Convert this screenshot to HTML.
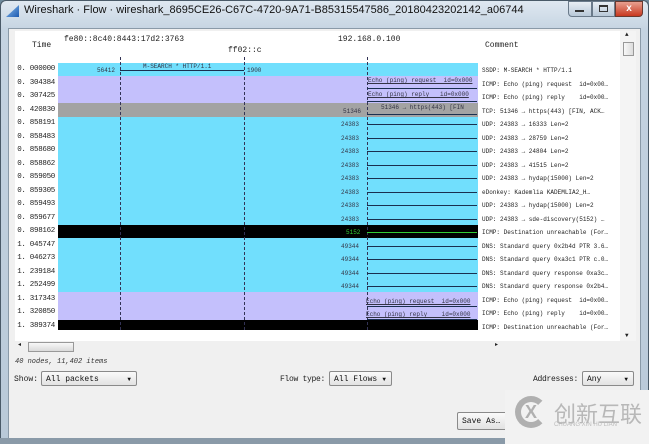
<!DOCTYPE html>
<html><head><style>
*{margin:0;padding:0;box-sizing:border-box}
body{width:649px;height:444px;overflow:hidden;background:#6e8a9c;font-family:"Liberation Mono",monospace;position:relative}
.a{position:absolute}
.win{left:0;top:0;width:649px;height:444px;background:linear-gradient(#dfe8f1,#c4d3e1 30px,#b9c9d8);border:1px solid #4a5a68;border-radius:6px 6px 0 0}
.cl{left:8px;top:28px;width:633px;height:412px;background:#f0f0f0;border:1px solid #8a9aa8}
.t{font-size:8px;color:#222;white-space:nowrap}
.row{left:58px;width:420px;height:14px}
.lbl{font-size:6px;color:#334;white-space:nowrap}
.line{height:1px;background:#1a3050}
.cb{background:linear-gradient(#fafafa,#e2e2e2);border:1px solid #8a8a8a;border-radius:2px;font-size:8px;padding:3px 4px;color:#111;white-space:nowrap}
.cb.dd:after{content:"▼";position:absolute;right:5px;top:4px;font-size:6px}
.sans{font-family:"Liberation Sans",sans-serif}
</style></head><body>
<div class="a win"></div>
<div class="a" style="left:6px;top:5px;width:13px;height:12px;background:linear-gradient(135deg,#8ec0f0,#1c5ab0);clip-path:polygon(0 100%,100% 0,100% 100%)"></div>
<div class="a sans" style="left:24px;top:4px;font-size:11px;color:#111;white-space:nowrap">Wireshark · Flow · wireshark_8695CE26-C67C-4720-9A71-B85315547586_20180423202142_a06744</div>
<div class="a" style="left:568px;top:1px;width:24px;height:16px;background:linear-gradient(#e8eef4,#b8c8d8);border:1px solid #6a7a8a;border-radius:0 0 0 4px"></div>
<div class="a" style="left:575px;top:10px;width:9px;height:2px;background:#333"></div>
<div class="a" style="left:592px;top:1px;width:23px;height:16px;background:linear-gradient(#e8eef4,#b8c8d8);border:1px solid #6a7a8a"></div>
<div class="a" style="left:599px;top:5px;width:9px;height:7px;border:1px solid #333;border-top-width:2px"></div>
<div class="a sans" style="left:615px;top:1px;width:28px;height:16px;background:linear-gradient(#e8a090,#c83820);border:1px solid #6a3a30;border-radius:0 0 4px 0;color:#fff;font-size:10px;font-weight:bold;text-align:center;line-height:14px">x</div>
<div class="a cl"></div>
<div class="a" style="left:15px;top:31px;width:605px;height:310px;background:#fff"></div>
<div class="a" style="left:620px;top:31px;width:16px;height:310px;background:#f4f4f4"></div>
<div class="a" style="left:623px;top:42px;width:11px;height:14px;background:linear-gradient(90deg,#f8f8f8,#dcdcdc);border:1px solid #999"></div>
<div class="a t" style="left:625px;top:31px;font-size:6px">▲</div>
<div class="a t" style="left:625px;top:332px;font-size:6px">▼</div>
<div class="a t" style="left:32px;top:41px">Time</div>
<div class="a t" style="left:64px;top:35px">fe80::8c40:8443:17d2:3763</div>
<div class="a t" style="left:228px;top:46px">ff02::c</div>
<div class="a t" style="left:338px;top:35px">192.168.0.100</div>
<div class="a t" style="left:485px;top:41px">Comment</div>

<div class="a row" style="top:63px;background:#71dffd"></div>
<div class="a row" style="top:76px;height:28px;background:#c4c0fc"></div>
<div class="a row" style="top:103px;background:#a3a3a3"></div>
<div class="a row" style="top:117px;height:109px;background:#71dffd"></div>
<div class="a row" style="top:225px;height:13px;background:#000"></div>
<div class="a row" style="top:238px;height:55px;background:#71dffd"></div>
<div class="a row" style="top:292px;height:28px;background:#c4c0fc"></div>
<div class="a row" style="top:320px;height:10px;background:#000"></div>

<div class="a" style="left:120px;top:57px;height:273px;border-left:1px dashed #335"></div>
<div class="a" style="left:244px;top:57px;height:273px;border-left:1px dashed #335"></div>
<div class="a" style="left:367px;top:57px;height:273px;border-left:1px dashed #335"></div>

<div class="a line" style="left:120px;top:70px;width:124px"></div>
<div class="a lbl" style="left:143px;top:63px">M-SEARCH * HTTP/1.1</div>
<div class="a lbl" style="left:97px;top:67px">56412</div>
<div class="a lbl" style="left:247px;top:67px">1900</div>
<div class="a lbl" style="left:368px;top:77px;text-decoration:underline">Echo (ping) request &nbsp;id=0x000</div>
<div class="a line" style="left:367px;top:88px;width:110px"></div>
<div class="a lbl" style="left:368px;top:91px;text-decoration:underline">Echo (ping) reply &nbsp;&nbsp;id=0x000</div>
<div class="a line" style="left:367px;top:101px;width:110px"></div>
<div class="a line" style="left:367px;top:114px;width:110px"></div>
<div class="a lbl" style="left:381px;top:104px">51346 → https(443) [FIN</div>
<div class="a lbl" style="left:343px;top:108px">51346</div>

<div id="g"></div>

<div class="a lbl" style="left:366px;top:298px;text-decoration:underline">Echo (ping) request &nbsp;id=0x000</div>
<div class="a line" style="left:367px;top:306px;width:110px"></div>
<div class="a lbl" style="left:366px;top:311px;text-decoration:underline">Echo (ping) reply &nbsp;&nbsp;&nbsp;id=0x000</div>
<div class="a line" style="left:367px;top:319px;width:110px"></div>

<div class="a" style="left:15px;top:341px;width:605px;height:11px;background:#f0f0f0"></div>
<div class="a" style="left:28px;top:342px;width:46px;height:10px;background:linear-gradient(#f8f8f8,#dadada);border:1px solid #999"></div>
<div class="a t sans" style="left:18px;top:341px;font-size:6px">◂</div>
<div class="a t sans" style="left:495px;top:341px;font-size:6px">▸</div>
<div class="a t" style="left:15px;top:358px;font-size:7px;font-style:italic;color:#333">40 nodes, 11,402 items</div>
<div class="a t" style="left:14px;top:375px;font-size:8px">Show:</div>
<div class="a cb dd" style="left:41px;top:371px;width:96px;height:15px">All packets</div>
<div class="a t" style="left:280px;top:375px;font-size:8px;letter-spacing:-0.3px">Flow type:</div>
<div class="a cb dd" style="left:329px;top:371px;width:63px;height:15px">All Flows</div>
<div class="a t" style="left:533px;top:375px;font-size:8px;letter-spacing:-0.3px">Addresses:</div>
<div class="a cb dd" style="left:582px;top:371px;width:52px;height:15px">Any</div>
<div class="a cb" style="left:457px;top:412px;width:50px;height:18px;padding-top:4px">Save As…</div>
<div class="a" style="left:0;top:438px;width:649px;height:6px;background:#8a9aa8"></div>
<div class="a" style="left:505px;top:390px;width:144px;height:54px;background:#f2f2f2"></div>
<div class="a" style="left:515px;top:396px;width:32px;height:32px;border-radius:50%;border:6px solid #b0b0b0;border-right-color:transparent"></div>
<div class="a sans" style="left:525px;top:402px;font-size:18px;font-weight:bold;color:#b0b0b0">X</div>
<div class="a" style="left:554px;top:397px;font-size:22px;color:#b8b8b8;font-family:'Liberation Sans','Noto Sans CJK SC',sans-serif;white-space:nowrap">创新互联</div>
<div class="a sans" style="left:554px;top:422px;font-size:6px;color:#bbb;white-space:nowrap">CHUANG XIN HU LIAN</div>

<script>
var times=["0.000000","0.304384","0.307425","0.420830","0.858191","0.858483","0.858680","0.858862","0.859050","0.859305","0.859493","0.859677","0.898162","1.045747","1.046273","1.239184","1.252499","1.317343","1.320850","1.389374"];
var com=["SSDP: M-SEARCH * HTTP/1.1","ICMP: Echo (ping) request  id=0x00…","ICMP: Echo (ping) reply    id=0x00…","TCP: 51346 → https(443) [FIN, ACK…","UDP: 24383 → 16333 Len=2","UDP: 24383 → 28759 Len=2","UDP: 24383 → 24804 Len=2","UDP: 24383 → 41515 Len=2","UDP: 24383 → hydap(15000) Len=2","eDonkey: Kademlia KADEMLIA2_H…","UDP: 24383 → hydap(15000) Len=2","UDP: 24383 → sde-discovery(5152) …","ICMP: Destination unreachable (For…","DNS: Standard query 0x2b4d PTR 3.6…","DNS: Standard query 0xa3c1 PTR c.0…","DNS: Standard query response 0xa3c…","DNS: Standard query response 0x2b4…","ICMP: Echo (ping) request  id=0x00…","ICMP: Echo (ping) reply    id=0x00…","ICMP: Destination unreachable (For…"];
var h="";
for(var i=0;i<20;i++){var y=63+i*13.5;
h+='<div class="a t" style="left:8px;width:47px;text-align:right;top:'+(y+2)+'px;font-size:7.5px;letter-spacing:-0.3px">'+times[i].replace(".",". ")+'</div>';
h+='<div class="a lbl" style="left:482px;top:'+(y+4)+'px;white-space:pre;color:#222">'+com[i]+'</div>';
if(i>=4&&i<=16){var port=i<12?"24383":(i==12?"5152":"49344");var col=i==12?"#3c3":"#1a3050";
h+='<div class="a lbl" style="left:'+(i==12?346:341)+'px;top:'+(y+4)+'px;color:'+(i==12?"#3c3":"#334")+'">'+port+'</div>';
h+='<div class="a line" style="left:367px;top:'+(y+7)+'px;width:110px;background:'+col+'"></div>';}
}
document.getElementById("g").innerHTML=h;
</script>
</body></html>
